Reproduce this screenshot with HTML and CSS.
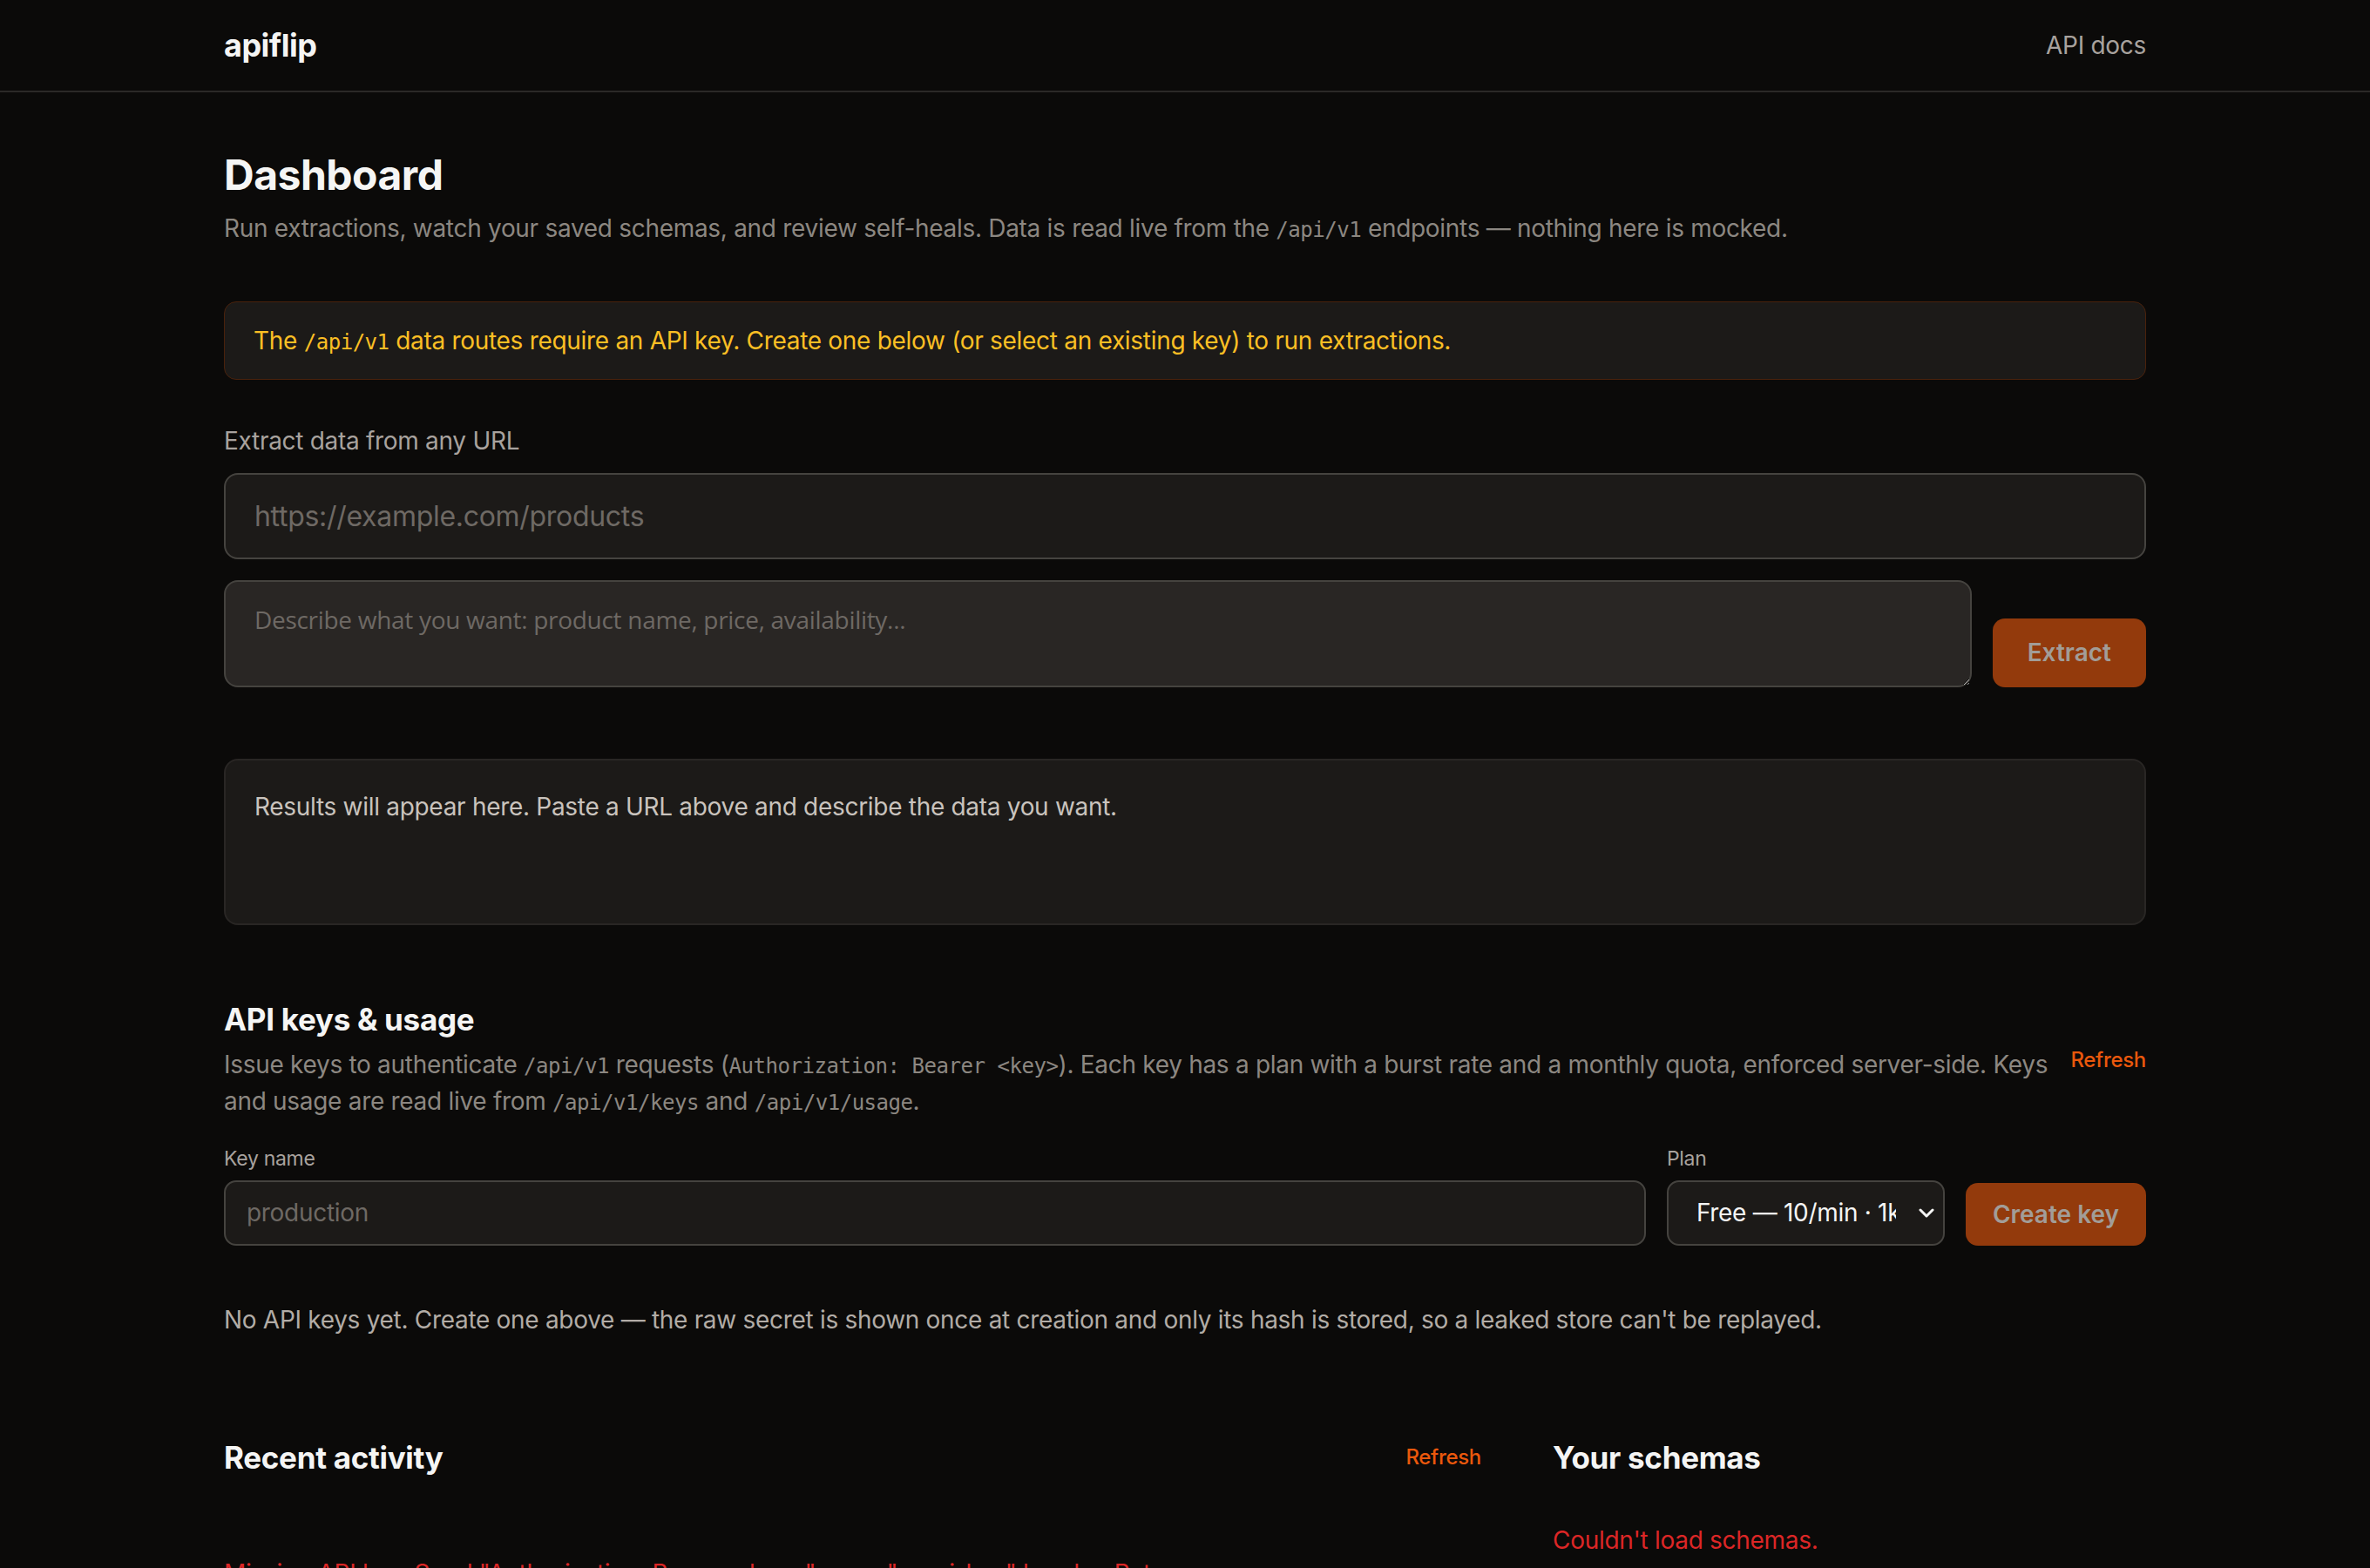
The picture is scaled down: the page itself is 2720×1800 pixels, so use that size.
FILE: index.html
```html
<!DOCTYPE html>
<html lang="en">
<head>
  <meta charset="UTF-8" />
  <meta name="viewport" content="width=device-width, initial-scale=1.0"/>
  <title>apiflip — Dashboard</title>
  <link rel="stylesheet" href="styles.css">
</head>
<body>

  <header class="topbar">
    <div class="wrap topbar-inner">
      <a class="logo" href="#">apiflip</a>
      <a class="nav-link" href="#">API docs</a>
    </div>
  </header>

  <main class="wrap">
    <h1>Dashboard</h1>
    <p class="subtitle">Run extractions, watch your saved schemas, and review self-heals. Data is read live from the <code>/api/v1</code> endpoints — nothing here is mocked.</p>

    <div class="alert">The <code>/api/v1</code> data routes require an API key. Create one below (or select an existing key) to run extractions.</div>

    <!-- extract form -->
    <label class="field-label" for="url">Extract data from any URL</label>
    <input id="url" class="url-input" type="text" placeholder="https://example.com/products">
    <div class="prompt-row">
      <textarea class="prompt" placeholder="Describe what you want: product name, price, availability..."></textarea>
      <button class="btn" disabled>Extract</button>
    </div>

    <div class="results">Results will appear here. Paste a URL above and describe the data you want.</div>

    <!-- keys -->
    <section class="keys">
      <h2>API keys &amp; usage</h2>
      <div class="keys-head">
        <p class="muted">Issue keys to authenticate <code>/api/v1</code> requests (<code>Authorization: Bearer &lt;key&gt;</code>). Each key has a plan with a burst rate and a monthly quota, enforced server-side. Keys and usage are read live from <code>/api/v1/keys</code> and <code>/api/v1/usage</code>.</p>
        <a class="refresh" href="#">Refresh</a>
      </div>

      <div class="key-form">
        <div class="key-field grow">
          <label class="small-label" for="keyname">Key name</label>
          <input id="keyname" class="key-input" type="text" placeholder="production">
        </div>
        <div class="key-field">
          <label class="small-label" for="plan">Plan</label>
          <div class="select-wrap">
            <select id="plan" class="plan-select">
              <option>Free — 10/min · 1k/month</option>
              <option>Pro — 60/min · 50k/month</option>
            </select>
            <svg class="chevron" width="18" height="12" viewBox="0 0 18 12" fill="none">
              <path d="M2 2l7 7 7-7" stroke="#f5f5f4" stroke-width="3" stroke-linecap="round" stroke-linejoin="round"/>
            </svg>
          </div>
        </div>
        <button class="btn btn-key" disabled>Create key</button>
      </div>

      <p class="empty">No API keys yet. Create one above — the raw secret is shown once at creation and only its hash is stored, so a leaked store can't be replayed.</p>
    </section>

    <div class="columns">
      <section>
        <div class="col-head">
          <h2>Recent activity</h2>
          <a class="refresh" href="#">Refresh</a>
        </div>
        <p class="error err-activity">Missing API key. Send "Authorization: Bearer &lt;key&gt;" or an "x-api-key" header. Retry</p>
      </section>
      <section>
        <div class="col-head">
          <h2>Your schemas</h2>
        </div>
        <p class="error">Couldn't load schemas.</p>
      </section>
    </div>
  </main>

</body>
</html>
```

FILE: styles.css
```css
body {
  margin: 0;
  background: #0b0a09;
  color: #f5f5f4;
  font-family: 'Inter', 'Roboto', sans-serif;
  font-size: 28px;
  letter-spacing: -0.3px;
}

a {
  text-decoration: none;
}

code {
  font-family: 'DejaVu Sans Mono', 'Liberation Mono', monospace;
  font-size: 0.86em;
  letter-spacing: -0.5px;
}

.wrap {
  max-width: 2206px;
  margin: 0 auto;
}

.topbar {
  height: 104px;
  border-bottom: 2px solid #2b2927;
}

.topbar-inner {
  height: 100%;
  display: flex;
  align-items: center;
  justify-content: space-between;
}

.logo {
  color: #f5f5f4;
  font-size: 36px;
  font-weight: 700;
  letter-spacing: -0.5px;
}

.nav-link {
  color: #a8a29e;
  font-size: 28px;
}

main {
  padding-top: 66px;
  padding-bottom: 60px;
}

h1 {
  margin: 0;
  font-size: 48px;
  line-height: 1.2;
  font-weight: 700;
  letter-spacing: -0.5px;
}

.subtitle {
  margin: 12px 0 0;
  color: #8c8781;
  line-height: 40px;
}

.alert {
  margin-top: 62px;
  box-sizing: border-box;
  height: 90px;
  padding: 24px 33px;
  line-height: 40px;
  background: #1c1a18;
  border: 1px solid #4a220c;
  border-radius: 14px;
  color: #fbbf24;
}

.field-label {
  display: block;
  margin-top: 50px;
  color: #a8a29e;
  line-height: 40px;
}

.url-input {
  display: block;
  box-sizing: border-box;
  width: 100%;
  height: 99px;
  margin-top: 17px;
  padding: 0 33px;
  background: #1c1a18;
  border: 2px solid #45433f;
  border-radius: 16px;
  color: #f5f5f4;
  font-family: inherit;
  font-size: 32px;
  letter-spacing: -0.3px;
  outline: none;
}

.url-input::placeholder,
.key-input::placeholder {
  color: #6e6964;
}

.prompt-row {
  display: flex;
  align-items: flex-end;
  gap: 24px;
  margin-top: 24px;
}

.prompt {
  flex: 1;
  box-sizing: border-box;
  height: 123px;
  padding: 24px 33px;
  background: #292624;
  border: 2px solid #45433f;
  border-radius: 16px;
  color: #f5f5f4;
  font-family: 'Open Sans', sans-serif;
  font-size: 28px;
  letter-spacing: -0.3px;
  resize: vertical;
  outline: none;
}

.prompt::placeholder {
  color: #6e6964;
}

.btn {
  height: 79px;
  padding: 0 40px;
  background: #933a0c;
  border: none;
  border-radius: 14px;
  color: #a29d98;
  font-family: inherit;
  font-size: 28px;
  font-weight: 600;
}

.results {
  margin-top: 82px;
  min-height: 191px;
  box-sizing: border-box;
  padding: 36px 33px;
  background: #1c1a18;
  border: 2px solid #292624;
  border-radius: 16px;
  color: #c9c3bd;
}

.keys {
  margin-top: 86px;
}

h2 {
  margin: 0;
  font-size: 35px;
  line-height: 44px;
  font-weight: 700;
}

.keys-head {
  display: flex;
  align-items: flex-start;
  gap: 12px;
  margin-top: 10px;
}

.muted {
  margin: 0;
  flex: 1;
  color: #8c8781;
  line-height: 40px;
}

.refresh {
  color: #ea580c;
  font-size: 24px;
  font-weight: 500;
  line-height: 30px;
}

.key-form {
  display: flex;
  align-items: flex-end;
  gap: 24px;
  margin-top: 29px;
}

.key-field {
  display: flex;
  flex-direction: column;
  gap: 10px;
}

.key-field.grow {
  flex: 1;
}

.small-label {
  color: #a8a29e;
  font-size: 23px;
  line-height: 30px;
}

.key-input,
.plan-select {
  box-sizing: border-box;
  height: 75px;
  background: #1c1a18;
  border: 2px solid #45433f;
  border-radius: 14px;
  color: #f5f5f4;
  font-family: inherit;
  font-size: 28px;
  letter-spacing: -0.3px;
  outline: none;
}

.key-input {
  width: 100%;
  padding: 0 24px;
}

.select-wrap {
  position: relative;
}

.plan-select {
  display: block;
  width: 319px;
  padding: 0 54px 0 32px;
  appearance: none;
  -webkit-appearance: none;
}

.chevron {
  position: absolute;
  right: 12px;
  top: 32px;
  pointer-events: none;
}

.btn-key {
  height: 72px;
  padding: 0 31px;
}

.empty {
  margin: 65px 0 0;
  color: #b2aca6;
  line-height: 40px;
}

.columns {
  display: grid;
  grid-template-columns: 1fr 681px;
  gap: 82px;
  margin-top: 116px;
}

.col-head {
  display: flex;
  align-items: center;
  justify-content: space-between;
}

.error {
  margin: 0;
  color: #dc2626;
  line-height: 40px;
}

.columns .error {
  margin-top: 53px;
}

.columns .err-activity {
  margin-top: 91px;
}
```
